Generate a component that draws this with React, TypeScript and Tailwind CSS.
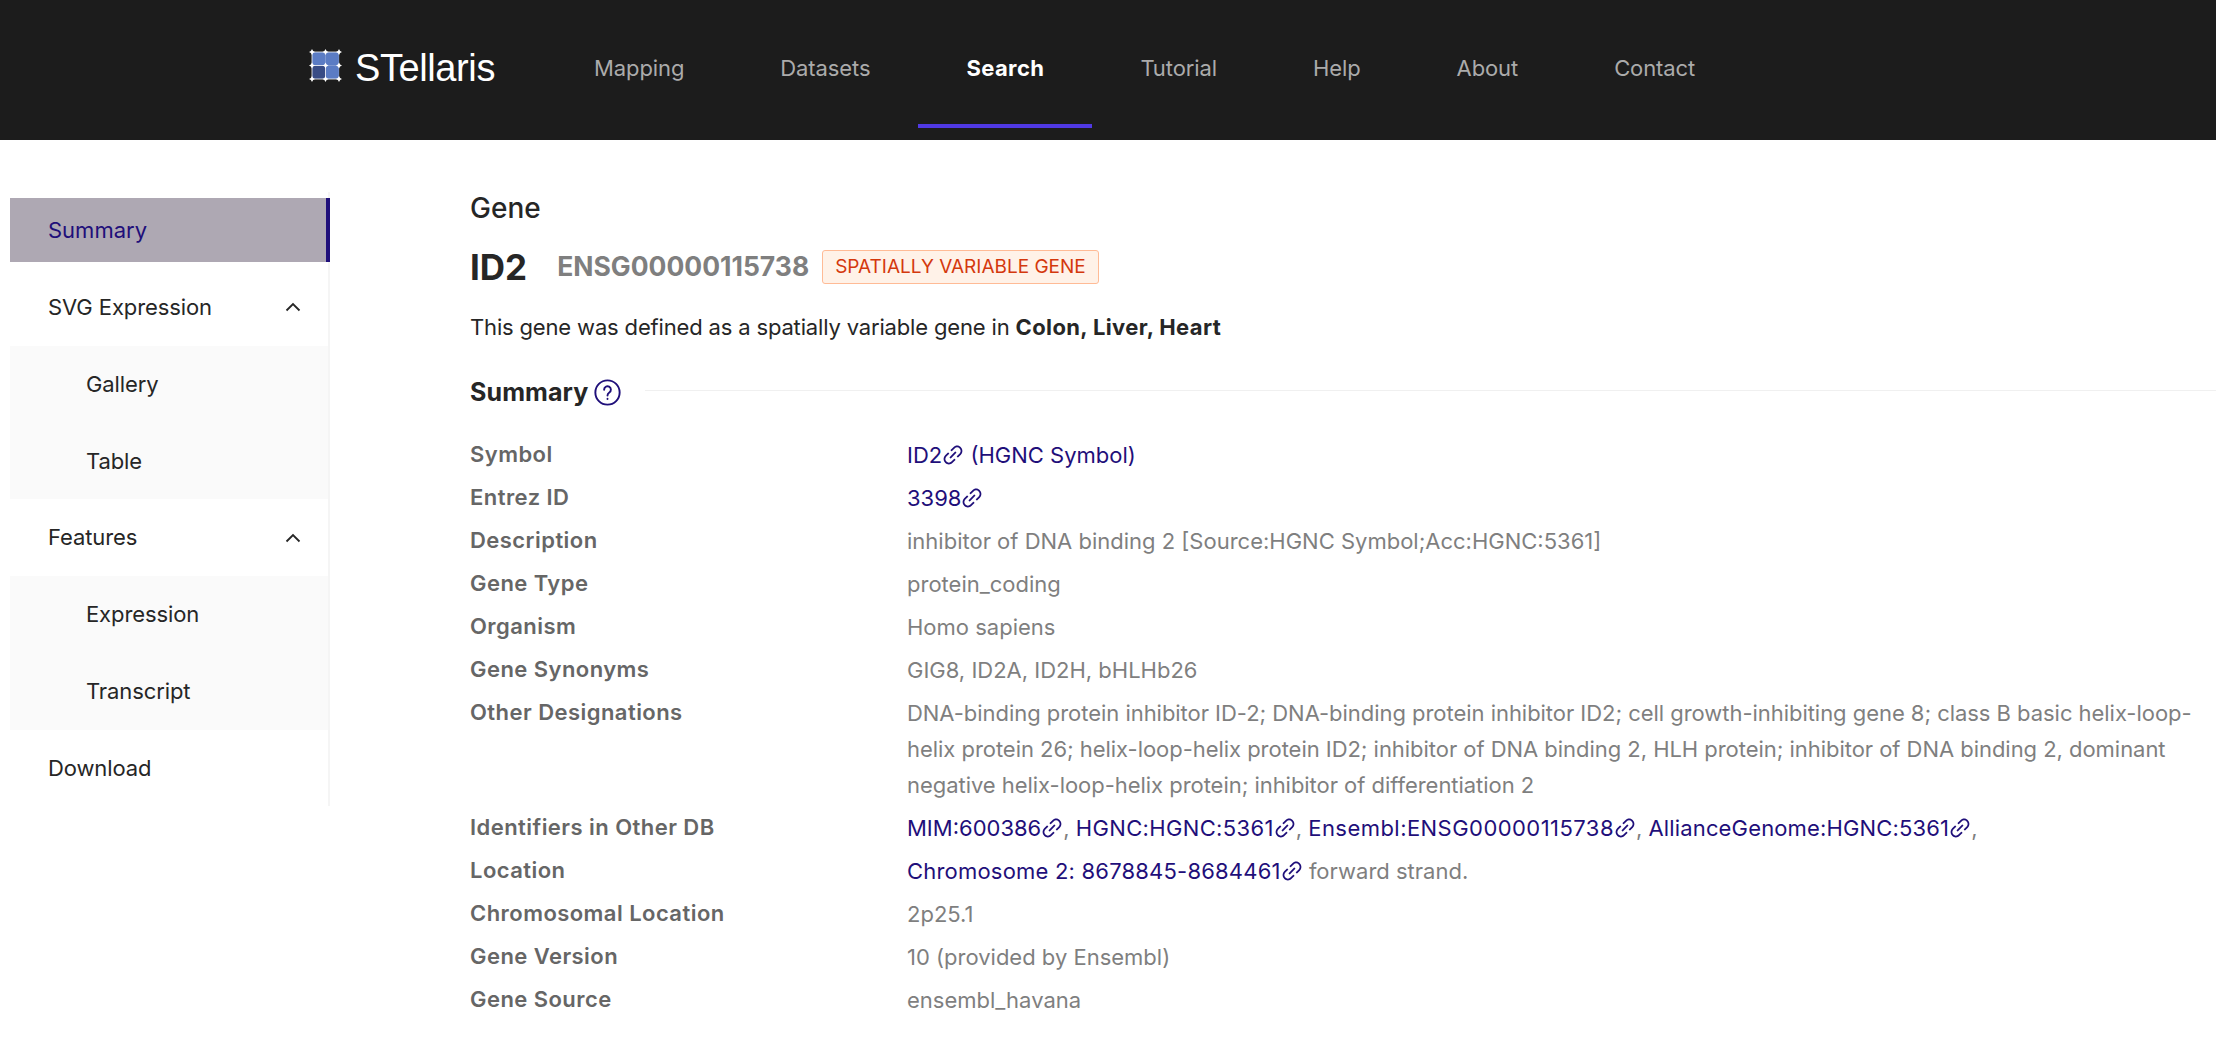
import type { ReactNode } from 'react';

const navItems = ['Mapping', 'Datasets', 'Search', 'Tutorial', 'Help', 'About', 'Contact'];

function LinkIcon() {
  return (
    <svg className="inline-block w-[22px] h-[22px] align-[-3px]" viewBox="64 64 896 896" fill="currentColor">
      <path d="M574 665.4a8.03 8.03 0 00-11.3 0L446.5 781.6c-53.8 53.8-144.6 59.5-204 0-59.5-59.5-53.8-150.2 0-204l116.2-116.2c3.1-3.1 3.1-8.2 0-11.3l-39.8-39.8a8.03 8.03 0 00-11.3 0L191.4 526.5c-84.6 84.6-84.6 221.5 0 306s221.5 84.6 306 0l116.2-116.2c3.1-3.1 3.1-8.2 0-11.3L574 665.4zm258.6-474c-84.6-84.6-221.5-84.6-306 0L410.3 307.6a8.03 8.03 0 000 11.3l39.7 39.7c3.1 3.1 8.2 3.1 11.3 0l116.2-116.2c53.8-53.8 144.6-59.5 204 0 59.5 59.5 53.8 150.2 0 204L665.3 562.6a8.03 8.03 0 000 11.3l39.8 39.8c3.1 3.1 8.2 3.1 11.3 0l116.2-116.2c84.5-84.6 84.5-221.5 0-306.1zM610.1 372.3a8.03 8.03 0 00-11.3 0L372.3 598.7a8.03 8.03 0 000 11.3l39.6 39.6c3.1 3.1 8.2 3.1 11.3 0l226.4-226.4c3.1-3.1 3.1-8.2 0-11.3l-39.5-39.6z" />
    </svg>
  );
}

function ExtLink({ children, className = '' }: { children: ReactNode; className?: string }) {
  return (
    <span className={`text-[#1f0f7a] ${className}`}>
      {children}
      <LinkIcon />
    </span>
  );
}

function Logo() {
  const pts = [0, 13.5, 27];
  return (
    <svg className="w-[33px] h-[33px] mt-[4px]" viewBox="-3 -3 33 33">
      <rect x="0" y="0" width="27" height="27" rx="1" fill="#5b7cc4" />
      <rect x="0" y="13.5" width="13.5" height="13.5" fill="#384c85" />
      <path d="M0 0H27M0 0V27M0 27H27M0 13.5H13.5M13.5 13.5V27" stroke="#fff" strokeWidth="0.8" fill="none" />
      <path d="M13.5 0V13.5M13.5 13.5H27M27 0V27" stroke="#fff" strokeOpacity="0.35" strokeWidth="0.6" fill="none" />
      {pts.map((y) =>
        pts.map((x) => (
          <path key={`${x}-${y}`} d={`M${x} ${y - 3}L${x + 1.1} ${y - 1.1}L${x + 3} ${y}L${x + 1.1} ${y + 1.1}L${x} ${y + 3}L${x - 1.1} ${y + 1.1}L${x - 3} ${y}L${x - 1.1} ${y - 1.1}Z`} fill="#fff" />
        ))
      )}
    </svg>
  );
}

function Chevron() {
  return (
    <svg className="w-[16px] h-[16px]" viewBox="0 0 16 16" fill="none" stroke="#262626" strokeWidth="1.8">
      <path d="M1.5 11.5L8 5L14.5 11.5" />
    </svg>
  );
}

function SideItem({ label, sub, open }: { label: string; sub?: boolean; open?: boolean }) {
  return (
    <div className={`h-[64px] flex items-center justify-between pr-[27px] mb-[13px] tracking-[-0.1px] ${sub ? 'pl-[76px]' : 'pl-[38px]'}`}>
      <span>{label}</span>
      {open && <Chevron />}
    </div>
  );
}

function SubMenu({ children }: { children: ReactNode }) {
  return <div className="bg-[#fafafa] -mt-[6.5px] pt-[6.5px] mb-[6.5px] h-[153.5px] overflow-hidden">{children}</div>;
}

function Row({ label, children }: { label: string; children: ReactNode }) {
  return (
    <div className="flex pb-[10px] leading-[33px]">
      <div className="w-[437px] shrink-0 font-semibold tracking-[0.45px] text-[#666666]">{label}</div>
      <div className="flex-1 min-w-0 text-[#7f7f7f] leading-[36px] -my-[1.5px]">{children}</div>
    </div>
  );
}

export default function App() {
  return (
    <div className="w-[2216px] h-[1042px] overflow-hidden bg-white text-[22px] text-[#262626] font-['Inter',sans-serif]">
      <header className="h-[140px] bg-[#1c1c1c] flex">
        <div className="w-[546px] shrink-0 pl-[309px] pt-[45px] flex items-start">
          <Logo />
          <span className="ml-[13px] text-[38px] leading-[46px] text-white font-['Liberation_Sans',sans-serif] tracking-[-0.4px]">STellaris</span>
        </div>
        <nav className="flex h-[128px]">
          {navItems.map((item) => (
            <div
              key={item}
              className={`px-[48px] leading-[136px] ${item === 'Search' ? 'font-bold tracking-[0.4px] text-white border-b-[4px] border-[#5039e4]' : 'tracking-[-0.1px] text-[#ababab]'}`}
            >
              {item}
            </div>
          ))}
        </nav>
      </header>

      <div className="flex">
        <aside className="w-[320px] shrink-0 ml-[10px] mt-[52px] pt-[6px] h-[614px] border-r-2 border-[#f5f5f5]">
          <div className="h-[64px] flex items-center pl-[38px] mb-[13px] mr-[-2px] bg-[#aea8b3] text-[#1f0f7a] border-r-4 border-[#1f0f7a]">Summary</div>
          <SideItem label="SVG Expression" open />
          <SubMenu>
            <SideItem label="Gallery" sub />
            <SideItem label="Table" sub />
          </SubMenu>
          <SideItem label="Features" open />
          <SubMenu>
            <SideItem label="Expression" sub />
            <SideItem label="Transcript" sub />
          </SubMenu>
          <SideItem label="Download" />
        </aside>

        <main className="flex-1 min-w-0 pl-[140px] pt-[49px]">
          <div className="text-[28px] leading-[38px] font-medium">Gene</div>
          <div className="flex items-center mt-[17px] h-[46px]">
            <span className="text-[35px] font-bold">ID2</span>
            <span className="ml-[30px] text-[26.5px] font-bold text-[#7f7f7f]">ENSG00000115738</span>
            <span className="ml-[13px] h-[34px] px-[12px] flex items-center rounded-[3px] border border-[#ffbb96] bg-[#fff2e8] text-[#d4380d] text-[19px]">SPATIALLY VARIABLE GENE</span>
          </div>
          <div className="mt-[21px] leading-[33px] tracking-[-0.16px]">
            This gene was defined as a spatially variable gene in <span className="font-bold tracking-[0.37px]">Colon, Liver, Heart</span>
          </div>
          <div className="flex items-center mt-[31px] h-[36px]">
            <span className="text-[25px] font-bold tracking-[0.1px]">Summary</span>
            <svg className="ml-[6px] w-[27px] h-[27px] mb-[1px]" viewBox="0 0 24 24" fill="none" stroke="#1f0f7a" strokeWidth="1.7" strokeLinecap="round">
              <circle cx="12" cy="12" r="10.8" />
              <path d="M9 9.5a3 3 0 1 1 4.6 2.5c-1 .7-1.6 1.3-1.6 2.6" />
              <path d="M12 17.6v.2" />
            </svg>
            <div className="flex-1 ml-[24px] mb-[5px] h-px bg-[#f0f0f0]" />
          </div>

          <div className="mt-[27px] pr-[8px]">
            <Row label="Symbol"><ExtLink>ID2</ExtLink> <span className="text-[#1f0f7a]">(HGNC Symbol)</span></Row>
            <Row label="Entrez ID"><ExtLink>3398</ExtLink></Row>
            <Row label="Description">inhibitor of DNA binding 2 [Source:HGNC Symbol;Acc:HGNC:5361]</Row>
            <Row label="Gene Type">protein_coding</Row>
            <Row label="Organism">Homo sapiens</Row>
            <Row label="Gene Synonyms">GIG8, ID2A, ID2H, bHLHb26</Row>
            <Row label="Other Designations">
              <span className="tracking-[-0.04px]">DNA-binding protein inhibitor ID-2; DNA-binding protein inhibitor ID2; cell growth-inhibiting gene 8; class B basic helix-loop-helix protein 26; helix-loop-helix protein ID2; inhibitor of DNA binding 2, HLH protein; inhibitor of DNA binding 2, dominant negative helix-loop-helix protein; inhibitor of differentiation 2</span>
            </Row>
            <Row label="Identifiers in Other DB">
              <ExtLink>MIM:600386</ExtLink>, <ExtLink className="tracking-[0.35px]">HGNC:HGNC:5361</ExtLink>, <ExtLink className="tracking-[0.45px]">Ensembl:ENSG00000115738</ExtLink>, <ExtLink className="tracking-[0.15px]">AllianceGenome:HGNC:5361</ExtLink>,
            </Row>
            <Row label="Location"><ExtLink className="tracking-[0.2px]">Chromosome 2: 8678845-8684461</ExtLink> forward strand.</Row>
            <Row label="Chromosomal Location">2p25.1</Row>
            <Row label="Gene Version">10 (provided by Ensembl)</Row>
            <Row label="Gene Source">ensembl_havana</Row>
          </div>
        </main>
      </div>
    </div>
  );
}
